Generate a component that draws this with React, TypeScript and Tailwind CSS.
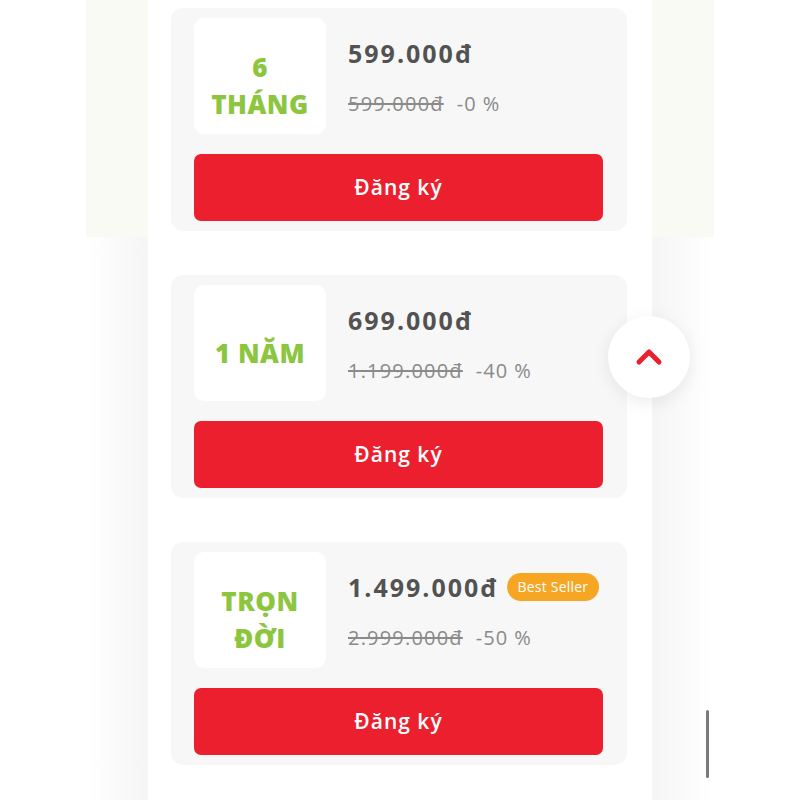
import { ChevronUp } from 'lucide-react';

interface Plan { id: string; label: string[]; price: string; old: string; off: string; best?: boolean; }

const plans: Plan[] = [
  { id: '6m', label: ['6', 'THÁNG'], price: '599.000đ', old: '599.000đ', off: '-0 %' },
  { id: '1y', label: ['1 NĂM'], price: '699.000đ', old: '1.199.000đ', off: '-40 %' },
  { id: 'life', label: ['TRỌN', 'ĐỜI'], price: '1.499.000đ', old: '2.999.000đ', off: '-50 %', best: true },
];

const PlanCard = ({ plan }: { plan: Plan }) => (
  <div className="bg-[#f7f7f7] rounded-[12px] pt-[10px] pb-[10px] pl-[23px] pr-[24px]">
    <div className="flex gap-[22px]">
      <div className="w-[132px] h-[116px] bg-white rounded-[10px] flex flex-col items-center justify-center pt-[20px]">
        {plan.label.map(l => (
          <div key={l} className="text-[#8cc63f] text-[26px] font-extrabold leading-[37px] tracking-[0.5px]">{l}</div>
        ))}
      </div>
      <div className="flex flex-col pt-[20px]">
        <div className="flex items-center gap-[8px]">
          <span className="text-[#525252] text-[25px] font-bold leading-[30px] tracking-[2px]">{plan.price}</span>
          {plan.best && (
            <span className="bg-[#f6a623] text-white text-[14px] leading-[28px] px-[11px] rounded-full tracking-[0.2px]">Best Seller</span>
          )}
        </div>
        <div className="flex items-center gap-[13px] mt-[24px] text-[#8a8a8a] text-[20px] leading-[24px] tracking-[1px]">
          <span className="line-through tracking-[1.2px]">{plan.old}</span>
          <span>{plan.off}</span>
        </div>
      </div>
    </div>
    <button className="mt-[20px] w-full h-[67px] bg-[#ec1f2e] rounded-[7px] text-white text-[21px] font-semibold tracking-[1px]">
      Đăng ký
    </button>
  </div>
);

const App = () => {
  return (
    <div className="relative w-[800px] h-[800px] overflow-hidden bg-white" style={{ fontFamily: '"Open Sans", "Liberation Sans", sans-serif' }}>
      <div className="ml-[86px] w-[628px] h-full flex">
        <div className="w-[62px] h-full flex flex-col">
          <div className="h-[237px] bg-[#f8faf3]" />
          <div className="flex-1 bg-gradient-to-r from-white to-[#f5f5f5]" />
        </div>
        <div className="w-[504px] h-full bg-white pt-[8px] pl-[23px] pr-[25px] flex flex-col gap-[44px]">
          {plans.map(p => <PlanCard key={p.id} plan={p} />)}
        </div>
        <div className="w-[62px] h-full flex flex-col">
          <div className="h-[237px] bg-[#f8faf3]" />
          <div className="flex-1 bg-gradient-to-l from-white to-[#f5f5f5]" />
        </div>
      </div>

      <button className="absolute left-[608px] top-[316px] w-[82px] h-[82px] rounded-full bg-white shadow-[0_4px_18px_rgba(0,0,0,0.08)] flex items-center justify-center">
        <ChevronUp className="w-[40px] h-[40px] text-[#ec1f2e]" strokeWidth={3} />
      </button>

      <div className="absolute left-[706px] top-[710px] w-[3px] h-[68px] rounded-full bg-[#7a7a7a]" />
    </div>
  );
};

export default App;
